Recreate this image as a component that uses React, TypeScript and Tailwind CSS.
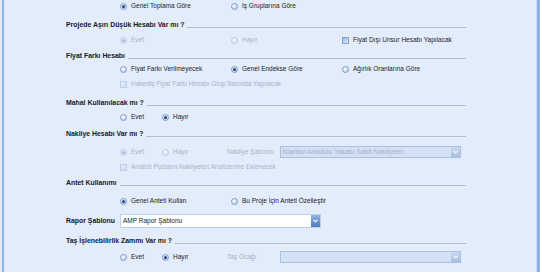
import React from 'react';

const font = { fontFamily: '"Liberation Sans", Arial, sans-serif' };

function Radio({ checked = false, disabled = false }: { checked?: boolean; disabled?: boolean }) {
  return (
    <span
      className={`relative inline-flex items-center justify-center w-[7px] h-[7px] rounded-full border shrink-0 ${
        disabled
          ? 'border-[#b9cbe6] bg-[radial-gradient(circle_at_40%_35%,#f3f7fd,#cfdcf0)]'
          : 'border-[#7d9bc8] bg-[radial-gradient(circle_at_40%_35%,#ffffff,#a9c2e6)]'
      }`}
    >
      {checked && (
        <span className={`w-[3px] h-[3px] rounded-full ${disabled ? 'bg-[#a7b7d0]' : 'bg-[#23407a]'}`} />
      )}
    </span>
  );
}

function Check({ disabled = false }: { disabled?: boolean }) {
  return (
    <span
      className={`inline-block w-[7px] h-[7px] border shrink-0 ${
        disabled
          ? 'border-[#bccde6] bg-[linear-gradient(135deg,#e4ecf8,#cddbf0)]'
          : 'border-[#86a3cc] bg-[linear-gradient(135deg,#9fbbe3,#dce8f8)]'
      }`}
    />
  );
}

function Option({ label, checked, disabled, box }: { label: string; checked?: boolean; disabled?: boolean; box?: boolean }) {
  return (
    <span className="flex items-center gap-[4px]">
      {box ? <Check disabled={disabled} /> : <Radio checked={checked} disabled={disabled} />}
      <span className={disabled ? 'text-[#a5b4cb]' : 'text-[#1e2129]'}>{label}</span>
    </span>
  );
}

function Chevron({ disabled = false }: { disabled?: boolean }) {
  return (
    <span
      className={`flex items-center justify-center w-[9px] h-full shrink-0 ${
        disabled
          ? 'bg-[linear-gradient(#c9d8ee,#a9c0e2)]'
          : 'bg-[linear-gradient(#8fb2e4,#4f7ac0)]'
      }`}
    >
      <svg width="5" height="4" viewBox="0 0 5 4">
        <path d="M0.5 0.8 L2.5 2.8 L4.5 0.8" fill="none" stroke="#fff" strokeWidth="1.1" />
      </svg>
    </span>
  );
}

function Header({ title, className = '' }: { title: string; className?: string }) {
  return (
    <div className={`flex items-center h-[12px] ml-[66px] w-[400px] ${className}`}>
      <span className="font-bold text-[6.9px] text-[#161a26] whitespace-nowrap">{title}</span>
      <span className="flex-1 h-px bg-[#b7bcc5] ml-[3px] mt-[4px]" />
    </div>
  );
}

function Combo({ text = '' }: { text?: string }) {
  return (
    <div className="flex w-[181px] h-[12px] border border-[#aac1e4] bg-[#d3e1f5]">
      <span className="flex-1 pl-[1px] text-[6.8px] leading-[10px] text-[#a2b3cc] whitespace-nowrap overflow-hidden">{text}</span>
      <Chevron disabled />
    </div>
  );
}

export default function App() {
  return (
    <div
      style={font}
      className="w-[540px] h-[272px] overflow-hidden bg-[#e2ecfa] text-[6.5px] leading-[12px] shadow-[inset_2px_0_0_#e2ecfa,inset_4px_0_0_#93b5e5,inset_-3px_0_0_#8db1e2,inset_-4px_0_0_#c9dbf2]"
    >
      {/* Genel / İş grubu */}
      <div className="flex items-center h-[12px] pl-[120px]">
        <span className="w-[111px]"><Option label="Genel Toplama Göre" checked /></span>
        <Option label="İş Gruplarına Göre" />
      </div>

      <Header title="Projede Aşırı Düşük Hesabı Var mı ?" className="mt-[7px]" />
      <div className="flex items-center h-[12px] pl-[120px] mt-[3px]">
        <span className="w-[111px]"><Option label="Evet" checked disabled /></span>
        <span className="w-[111px]"><Option label="Hayır" disabled /></span>
        <Option label="Fiyat Dışı Unsur Hesabı Yapılacak" box />
      </div>

      <Header title="Fiyat Farkı Hesabı" className="mt-[4px]" />
      <div className="flex items-center h-[12px] pl-[120px] mt-px">
        <span className="w-[111px]"><Option label="Fiyat Farkı Verilmeyecek" /></span>
        <span className="w-[111px]"><Option label="Genel Endekse Göre" checked /></span>
        <Option label="Ağırlık Oranlarına Göre" />
      </div>
      <div className="flex items-center h-[12px] pl-[120px] mt-[3px]">
        <Option label="Hakediş Fiyat Farkı Hesabı Grup Bazında Yapılacak" box disabled />
      </div>

      <Header title="Mahal Kullanılacak mı ?" className="mt-[7px]" />
      <div className="flex items-center h-[12px] pl-[120px] mt-[2px]">
        <span className="w-[42px]"><Option label="Evet" /></span>
        <Option label="Hayır" checked />
      </div>

      <Header title="Nakliye Hesabı Var mı ?" className="mt-[5px]" />
      <div className="flex items-center h-[12px] pl-[120px] mt-[6px]">
        <span className="w-[42px]"><Option label="Evet" checked disabled /></span>
        <span className="w-[65px]"><Option label="Hayır" disabled /></span>
        <span className="w-[53px] text-[#a5b4cb]">Nakliye Şablonu</span>
        <Combo text="İstanbul Anadolu Yakası Sabit Nakliyeler" />
      </div>
      <div className="flex items-center h-[12px] pl-[120px] mt-[3px]">
        <Option label="Analizli Pozların Nakliyeleri Analizlerine Eklenecek" box disabled />
      </div>

      <Header title="Antet Kullanımı" className="mt-[4px]" />
      <div className="flex items-center h-[12px] pl-[120px] mt-[6px]">
        <span className="w-[111px]"><Option label="Genel Anteti Kullan" checked /></span>
        <Option label="Bu Proje İçin Anteti Özelleştir" />
      </div>

      <div className="flex items-center h-[14px] pl-[66px] mt-[7px]">
        <span className="w-[54px] font-bold text-[6.9px] text-[#161a26]">Rapor Şablonu</span>
        <div className="flex w-[201px] h-[14px] border border-[#bcd0ea] bg-white">
          <span className="flex-1 pl-[2px] leading-[12px] text-[#1e2129]">AMP Rapor Şablonu</span>
          <Chevron />
        </div>
      </div>

      <Header title="Taş İşlenebilirlik Zammı Var mı ?" className="mt-[7px]" />
      <div className="flex items-center h-[12px] pl-[120px] mt-[4px]">
        <span className="w-[42px]"><Option label="Evet" /></span>
        <span className="w-[65px]"><Option label="Hayır" checked /></span>
        <span className="w-[53px] text-[#a5b4cb]">Taş Ocağı</span>
        <Combo />
      </div>
    </div>
  );
}
